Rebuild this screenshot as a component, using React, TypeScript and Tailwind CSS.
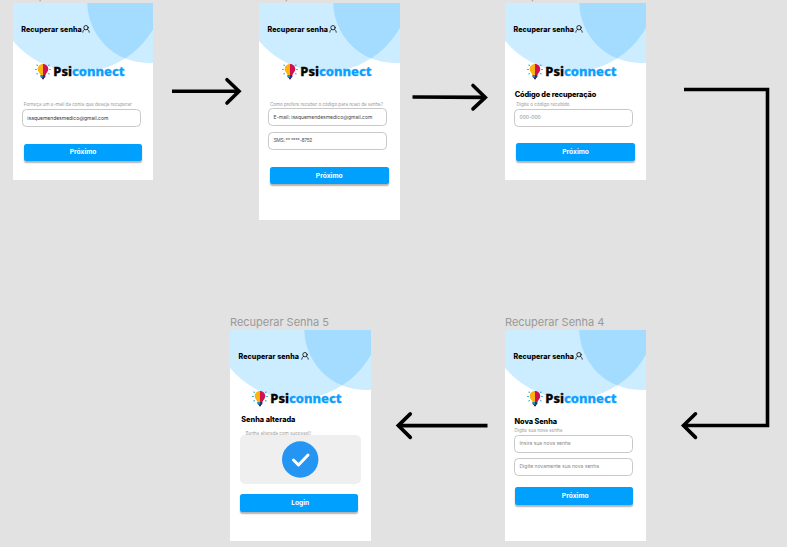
import React from "react";

function Bulb() {
  return (
    <svg viewBox="0 0 16 17" className="h-[17px] w-[16px] shrink-0">
      <path d="M8 .9C4.800.9 2.700 3.200 2.700 6.100c0 2.800 2.200 3.900 2.800 5.900H8z" fill="#fbb40d" />
      <path d="M8 .9c3.200 0 5.300 2.300 5.300 5.200 0 2.800-2.200 3.900-2.800 5.900H8z" fill="#d3104f" />
      <path d="M5.600 12h4.800v2L9.300 15H6.700l-1.100-1z" fill="#1d3a6c" />
      <path d="M5.600 12H8v2.400H6.100l-.5-.5z" fill="#1593b8" />
      <path d="M7 14.700h2v1.500H7z" fill="#4c1d5c" />
      <g stroke="#1fa6d6" strokeWidth="1.100" strokeLinecap="round">
        <path d="M.6 6.500h.8M1.900 2l.5.400M1.900 11l.5-.4M14.600 6.500h.8M13.600 2.400l.5-.4M13.600 10.600l.5.400" />
      </g>
    </svg>
  );
}

function Logo() {
  return (
    <div className="flex h-[17px] items-center">
      <Bulb />
      <svg viewBox="0 0 74 17" className="ml-[2px] h-[17px] w-[74px] overflow-visible">
        <text x="0.300" y="13.300" textLength="71.300" lengthAdjust="spacingAndGlyphs" strokeWidth=".3" className="font-['Noto_Sans',sans-serif] text-[12.600px] font-extrabold">
          <tspan fill="#050505" stroke="#050505">Psi</tspan>
          <tspan fill="#0aa0ff" stroke="#0aa0ff">connect</tspan>
        </text>
      </svg>
    </div>
  );
}

function Person() {
  return (
    <svg viewBox="0 0 8 8" className="h-[8px] w-[8px]" fill="none" stroke="#111" strokeWidth=".85" strokeLinecap="round">
      <circle cx="4" cy="2.700" r="2.200" />
      <path d="M.8 7.200c.1-1.500.8-2.300 1.900-2.900M7.200 7.200c-.1-1.500-.8-2.300-1.900-2.900" />
    </svg>
  );
}

type FrameProps = {
  name: string;
  place: string;
  height: string;
  logo?: string;
  iconGap?: string;
  children: React.ReactNode;
};

function Frame({ name, place, height, logo = "ml-[22px]", iconGap = "ml-0", children }: FrameProps) {
  return (
    <section className={`absolute w-[140.600px] ${place}`}>
      <h2 className="h-[16px] whitespace-nowrap text-[11px] leading-[16px] tracking-[-0.020px] text-[#999]">{name}</h2>
      <div className={`relative overflow-hidden bg-white ${height}`}>
        <svg className="absolute left-0 top-0 h-[80px] w-full" fill="#00a0ff" fillOpacity=".2">
          <circle cx="66" cy="-16.400" r="85.400" />
          <circle cx="135.300" cy="-1" r="61" />
        </svg>
        <div className="relative flex flex-col items-start">
          <div className="ml-[8.500px] mt-[22px] flex h-[9px] items-center">
            <span className="w-[61px] whitespace-nowrap text-[7.100px] font-extrabold leading-[9px] tracking-[0.070px] text-black">Recuperar senha</span>
            <span className={`flex h-[10px] items-start ${iconGap}`}><Person /></span>
          </div>
          <div className={`mt-[29px] ${logo}`}><Logo /></div>
          {children}
        </div>
      </div>
    </section>
  );
}

function Heading({ className, children }: { className: string; children: string }) {
  return <h3 className={`h-[10px] whitespace-nowrap text-[7.300px] font-extrabold leading-[10px] text-black ${className}`}>{children}</h3>;
}

function Label({ className, children }: { className: string; children: string }) {
  return <p className={`h-[6px] whitespace-nowrap text-[4.600px] leading-[6px] text-[#999] ${className}`}>{children}</p>;
}

function Field({ className, children }: { className: string; children: string }) {
  return (
    <div className={`flex h-[18px] w-[119px] items-center whitespace-nowrap rounded-[4.500px] border border-[#c8c8c8] bg-white pl-[4.500px] text-[5px] leading-none ${className}`}>
      {children}
    </div>
  );
}

function Button({ className, children }: { className: string; children: string }) {
  return (
    <button className={`flex h-[17.500px] w-[118.500px] items-center justify-center rounded-[2.500px] bg-[#00a0ff] pt-[1px] text-[6.700px] font-bold leading-none text-white shadow-[0_1.200px_1.500px_rgba(0,0,0,0.3)] ${className}`}>
      {children}
    </button>
  );
}

function Arrows() {
  return (
    <svg className="pointer-events-none absolute left-0 top-0 h-[547px] w-[787px]" fill="none" stroke="#000" strokeWidth="3.600">
      <path d="M172 91.300h67" />
      <path d="M227 79.700l12 11.600-12 11.700" strokeLinecap="round" />
      <path d="M412.500 97l73 .4" />
      <path d="M473 85.500l12.300 11.900-12.300 11.500" strokeLinecap="round" />
      <path d="M684 89.500h83.500v336H684" />
      <path d="M695.500 413.800l-12 11.700 12 11.900" strokeLinecap="round" />
      <path d="M487.500 425.600H399" />
      <path d="M410.300 413.900l-12 11.700 12 11.800" strokeLinecap="round" />
    </svg>
  );
}

export default function App() {
  return (
    <main className="relative h-[547px] w-[787px] overflow-hidden bg-[#e2e2e2] font-[Inter,sans-serif]">
      <Frame name="Recuperar Senha 1" place="left-[12.800px] top-[-13px]" height="h-[176.500px]">
        <Label className="ml-[11px] mt-[21.500px] tracking-[-0.010px]">Forneça um e-mail da conta que deseja recuperar</Label>
        <Field className="ml-[9px] mt-[1.500px] text-[#333]">isaquemendesmedico@gmail.com</Field>
        <Button className="ml-[11px] mt-[16.500px]">Próximo</Button>
      </Frame>
      <Frame name="Recuperar Senha 2" place="left-[259px] top-[-13px]" height="h-[216.700px]" logo="ml-[22.500px]">
        <Label className="ml-[11px] mt-[21.500px] tracking-[-0.040px]">Como prefere receber o código para reset da senha?</Label>
        <Field className="ml-[9px] mt-[0.800px] text-[#444]">E-mail: isaquemendesmedico@gmail.com</Field>
        <Field className="ml-[9px] mt-[5.400px] tracking-[-0.350px] text-[#555]">SMS: ** ****-8752</Field>
        <Button className="ml-[11px] mt-[17.300px]">Próximo</Button>
      </Frame>
      <Frame name="Recuperar Senha 3" place="left-[505px] top-[-13px]" height="h-[176.500px]">
        <Heading className="ml-[9.700px] mt-[10px] tracking-[-0.110px]">Código de recuperação</Heading>
        <Label className="ml-[11.500px] mt-[1.500px]">Digite o código recebido</Label>
        <Field className="ml-[9px] mt-[1.300px] text-[#888]">000-000</Field>
        <Button className="ml-[11.300px] mt-[16.700px]">Próximo</Button>
      </Frame>
      <Frame name="Recuperar Senha 5" place="left-[230px] top-[314px]" height="h-[210.700px]" iconGap="ml-[1px]">
        <Heading className="ml-[11.300px] mt-[7.900px]">Senha alterada</Heading>
        <Label className="ml-[15.500px] mt-[6.100px]">Senha alterada com sucesso!!</Label>
        <div className="ml-[10px] mt-[-1.700px] flex h-[48.500px] w-[121px] items-center justify-center rounded-[5px] bg-[#efefef]">
          <svg viewBox="0 0 37 37" className="h-[37px] w-[37px]">
            <circle cx="18.200" cy="18.500" r="18.200" fill="#2495f3" />
            <path d="M11.500 19l5 5 9.500-10" fill="none" stroke="#fff" strokeWidth="3" strokeLinecap="round" strokeLinejoin="round" />
          </svg>
        </div>
        <Button className="ml-[9.500px] mt-[10.500px] pl-[3px]">Login</Button>
      </Frame>
      <Frame name="Recuperar Senha 4" place="left-[505px] top-[314px]" height="h-[210.700px]">
        <Heading className="ml-[9.500px] mt-[10px] tracking-[-0.050px]">Nova Senha</Heading>
        <Label className="ml-[9.500px] mt-[1.200px]">Digite sua nova senha</Label>
        <Field className="ml-[9px] mt-[0.700px] text-[#888]">Insira sua nova senha</Field>
        <Field className="ml-[9px] mt-[5px] text-[#888]">Digite novamente sua nova senha</Field>
        <Button className="ml-[9.500px] mt-[11.600px] pl-[3px]">Próximo</Button>
      </Frame>
      <Arrows />
    </main>
  );
}
